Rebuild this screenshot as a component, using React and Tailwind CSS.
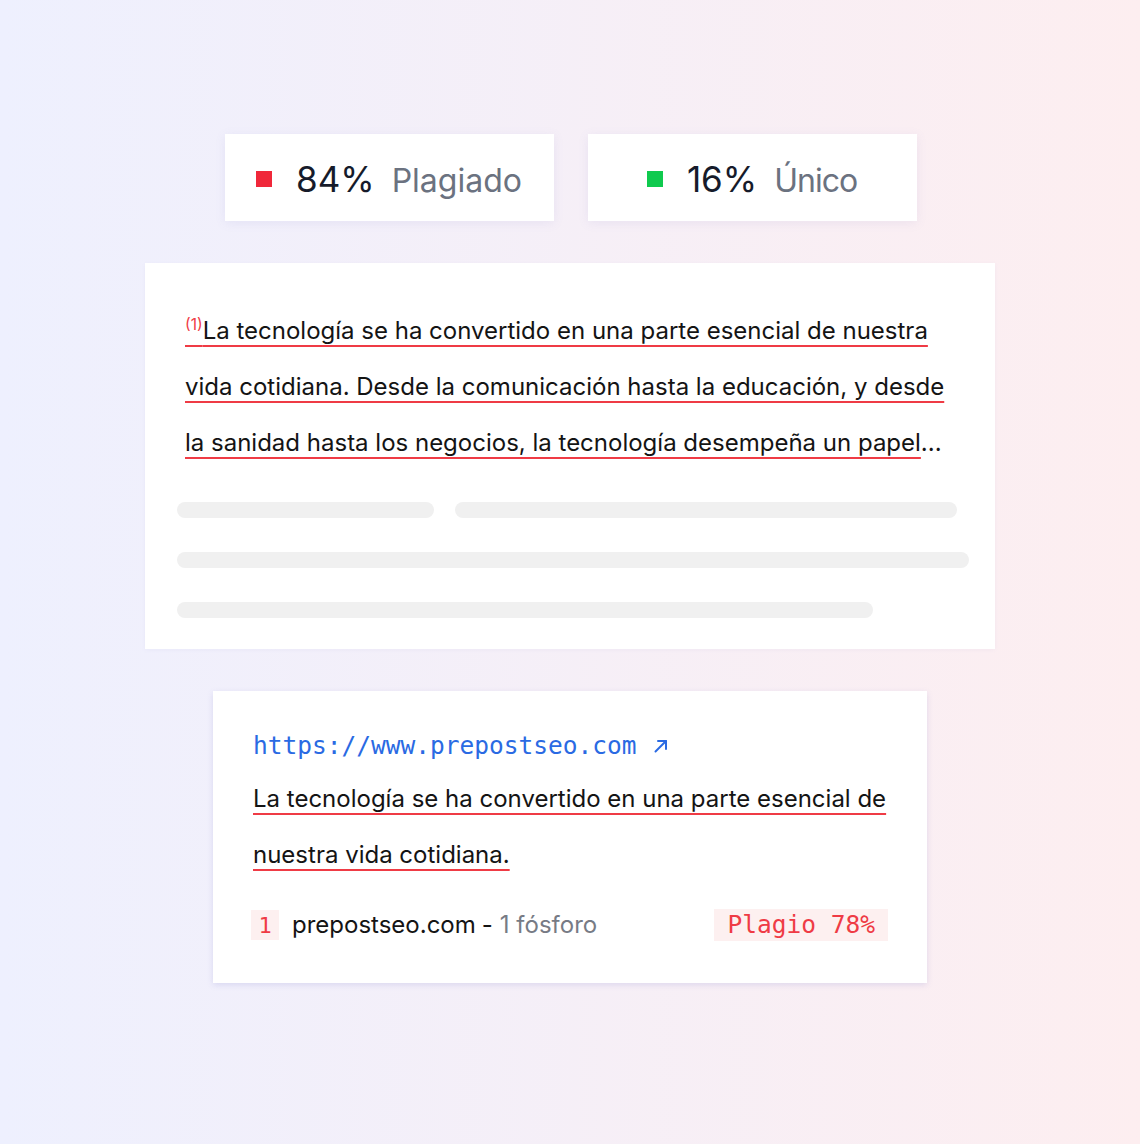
import React from "react";

const inter = { fontFamily: "Inter, 'Noto Sans', sans-serif" };
const mono = { fontFamily: "'DejaVu Sans Mono', 'Liberation Mono', monospace" };

function StatCard({ color, value, label, labelClass = "" }) {
  return (
    <div className="w-[329px] h-[87px] bg-white flex items-center justify-center shadow-[0_2px_10px_rgba(120,120,200,0.10)]">
      <span className={`w-4 h-4 ${color} mt-[3px]`} />
      <span className="ml-[24px] text-[35px] leading-none text-[#161b2b] mt-[4px]">{value}</span>
      <span className={`ml-[17px] text-[32px] leading-none text-[#6b7280] mt-[6px] ${labelClass}`}>{label}</span>
    </div>
  );
}

function Marked({ children }) {
  return (
    <span className="underline decoration-[#ef3b45] decoration-[1.5px] underline-offset-[6px] [text-decoration-skip-ink:none]">
      {children}
    </span>
  );
}

function SkeletonBar({ w }) {
  return <div className={`h-4 rounded-full bg-[#f0f0f0] ${w}`} />;
}

function ExternalArrow() {
  return (
    <svg width="16" height="16" viewBox="0 0 16 16" fill="none" stroke="currentColor" strokeWidth="2" strokeLinecap="round" strokeLinejoin="round">
      <path d="M2.5 13.5 13 3" />
      <path d="M5 3h8v8" />
    </svg>
  );
}

export default function App() {
  return (
    <div
      className="min-h-[1144px] w-full bg-linear-to-r from-[#eef0fe] to-[#fdeef0] flex flex-col items-center pt-[134px]"
      style={inter}
    >
      {/* summary */}
      <div className="flex gap-[34px] ml-[1px]">
        <StatCard color="bg-[#f0283a]" value="84%" label="Plagiado" />
        <StatCard color="bg-[#0fca4e]" value="16%" label="Único" labelClass="tracking-[-1px]" />
      </div>

      {/* checked text */}
      <div className="mt-[42px] w-[850px] bg-white pt-10 pb-[31px] shadow-[0_1px_4px_rgba(120,120,200,0.06)]">
        <p className="px-10 text-[24px] leading-[56px] text-[#141414]">
          <Marked>
            <span className="text-[15.5px] leading-none text-[#ef3b45] align-[9px]">(1)</span>La tecnología se ha convertido en una parte esencial de nuestra
            <br />
            vida cotidiana. Desde la comunicación hasta la educación, y desde
            <br />
            la sanidad hasta los negocios, la tecnología desempeña un papel
          </Marked>
          ...
        </p>
        <div className="mt-[31px] px-8 flex flex-col gap-[34px]">
          <div className="flex gap-[21px]">
            <SkeletonBar w="w-[257px]" />
            <SkeletonBar w="w-[502px]" />
          </div>
          <SkeletonBar w="w-[792px]" />
          <SkeletonBar w="w-[696px]" />
        </div>
      </div>

      {/* matched source */}
      <div className="mt-[42px] w-[714px] h-[292px] bg-white px-10 pt-[39px] shadow-[0_2px_6px_rgba(110,110,200,0.18)]">
        <div className="flex items-center gap-[16px] text-[#2a6ae3]">
          <span className="text-[24.5px] leading-[32px]" style={mono}>
            https://www.prepostseo.com
          </span>
          <ExternalArrow />
        </div>
        <p className="mt-[9px] text-[24px] leading-[56px] text-[#141414]">
          <Marked>
            La tecnología se ha convertido en una parte esencial de
            <br />
            nuestra vida cotidiana.
          </Marked>
        </p>
        <div className="mt-[24px] flex items-center">
          <span className="w-[28px] h-[30px] ml-[-2px] bg-[#fdf0f0] text-[#ef3b45] text-[22px] flex items-center justify-center" style={mono}>
            1
          </span>
          <span className="ml-[13px] text-[24px] text-[#141414]">prepostseo.com</span>
          <span className="ml-[6px] text-[24px] text-[#141414]">-</span>
          <span className="ml-[7px] text-[24px] text-[#777b85]">1 fósforo</span>
          <span
            className="ml-auto mr-[-1px] h-[32px] px-[13px] bg-[#fdf0f0] text-[#ef3b45] text-[24.5px] flex items-center"
            style={mono}
          >
            Plagio 78%
          </span>
        </div>
      </div>
    </div>
  );
}
